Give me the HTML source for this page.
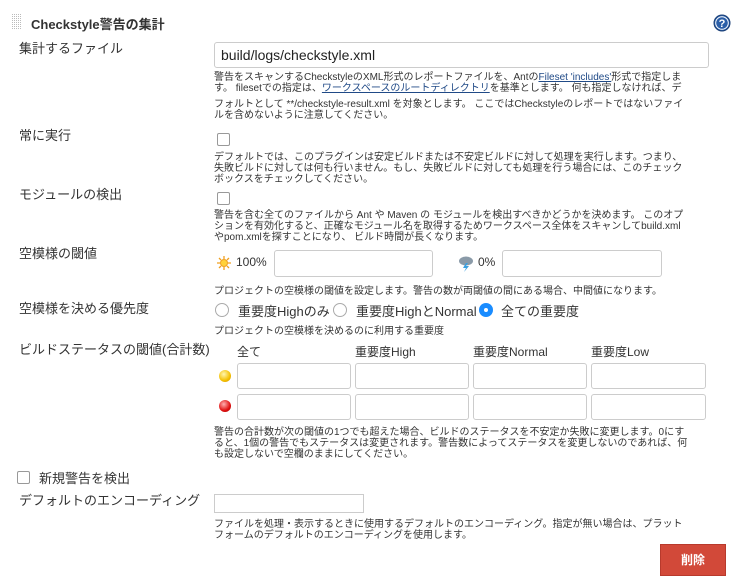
<!DOCTYPE html>
<html><head><meta charset="utf-8"><style>
body{margin:0;width:754px;height:588px;background:#fff;position:relative;overflow:hidden;font-family:"Liberation Sans","Noto Sans CJK JP",sans-serif;color:#333}
.a{position:absolute;white-space:nowrap}
.lbl{font-size:13px;color:#333}
.h{font-size:10px;line-height:11px;color:#333}
.in{position:absolute;border:1px solid #ccc;border-radius:3px;background:#fff;box-sizing:border-box}
.cb{position:absolute;width:11px;height:11px;border:1px solid #999;border-radius:2px;background:#fff}
.rd{position:absolute;width:12px;height:12px;border:1px solid #aaa;border-radius:50%;background:#fff}
a{color:#204a87}
</style></head><body>
<svg class="a" style="left:12px;top:14px" width="10" height="16"><defs><pattern id="p" width="2" height="2" patternUnits="userSpaceOnUse"><rect width="1" height="1" fill="#bbb"/></pattern></defs><rect width="10" height="16" fill="url(#p)"/></svg>
<div class="a lbl" style="left:31px;top:14px;font-weight:bold">Checkstyle警告の集計</div>
<svg class="a" style="left:713px;top:14px" width="18" height="18" viewBox="0 0 18 18"><circle cx="9" cy="9" r="8" fill="#2a5ea8" stroke="#1c4076"/><circle cx="9" cy="9" r="6.3" fill="none" stroke="#fff" stroke-width="1"/><text x="9" y="13" font-size="11" font-weight="bold" fill="#fff" text-anchor="middle" font-family="Liberation Sans">?</text></svg>

<div class="a lbl" style="left:19px;top:38px">集計するファイル</div>
<div class="in" style="left:214px;top:42px;width:495px;height:26px"></div>
<div class="a" style="left:221px;top:47px;font-size:14px;color:#222">build/logs/checkstyle.xml</div>
<div class="a h" style="left:214px;top:72px">警告をスキャンするCheckstyleのXML形式のレポートファイルを、Antの<a href="#">Fileset 'includes'</a>形式で指定しま<br>す。 filesetでの指定は、<a href="#">ワークスペースのルートディレクトリ</a>を基準とします。 何も指定しなければ、デ</div>
<div class="a h" style="left:214px;top:99px">フォルトとして **/checkstyle-result.xml を対象とします。 ここではCheckstyleのレポートではないファイ<br>ルを含めないように注意してください。</div>

<div class="a lbl" style="left:19px;top:125px">常に実行</div>
<div class="cb" style="left:217px;top:133px"></div>
<div class="a h" style="left:214px;top:152px">デフォルトでは、このプラグインは安定ビルドまたは不安定ビルドに対して処理を実行します。つまり、<br>失敗ビルドに対しては何も行いません。もし、失敗ビルドに対しても処理を行う場合には、このチェック<br>ボックスをチェックしてください。</div>

<div class="a lbl" style="left:19px;top:184px">モジュールの検出</div>
<div class="cb" style="left:217px;top:192px"></div>
<div class="a h" style="left:214px;top:210px">警告を含む全てのファイルから Ant や Maven の モジュールを検出すべきかどうかを決めます。 このオプ<br>ションを有効化すると、正確なモジュール名を取得するためワークスペース全体をスキャンしてbuild.xml<br>やpom.xmlを探すことになり、 ビルド時間が長くなります。</div>

<div class="a lbl" style="left:19px;top:243px">空模様の閾値</div>
<svg class="a" style="left:216px;top:255px" width="16" height="16" viewBox="0 0 16 16"><g stroke="#f0a020" stroke-width="1.3"><path d="M8 1v3M8 12v3M1 8h3M12 8h3M3 3l2 2M11 11l2 2M3 13l2-2M11 5l2-2"/></g><circle cx="8" cy="8" r="3.5" fill="#ffd23a" stroke="#f0a020"/></svg>
<div class="a" style="left:236px;top:255px;font-size:12px">100%</div>
<div class="in" style="left:274px;top:250px;width:159px;height:27px"></div>
<svg class="a" style="left:457px;top:254px" width="18" height="18" viewBox="0 0 18 18"><ellipse cx="9" cy="7" rx="7" ry="4.5" fill="#8a9aa8"/><path d="M9 9l-3 5h3l-2 4 5-6H9l2-3z" fill="#3aa0e0"/></svg>
<div class="a" style="left:478px;top:255px;font-size:12px">0%</div>
<div class="in" style="left:502px;top:250px;width:160px;height:27px"></div>
<div class="a h" style="left:214px;top:286px">プロジェクトの空模様の閾値を設定します。警告の数が両閾値の間にある場合、中間値になります。</div>

<div class="a lbl" style="left:19px;top:298px">空模様を決める優先度</div>
<div class="rd" style="left:215px;top:303px"></div>
<div class="a" style="left:238px;top:301px;font-size:13px">重要度Highのみ</div>
<div class="rd" style="left:333px;top:303px"></div>
<div class="a" style="left:356px;top:301px;font-size:13px">重要度HighとNormal</div>
<div class="a" style="left:479px;top:303px;width:14px;height:14px;border-radius:50%;background:#1a8cff"></div>
<div class="a" style="left:484px;top:308px;width:4px;height:4px;border-radius:50%;background:#fff"></div>
<div class="a" style="left:501px;top:301px;font-size:13px">全ての重要度</div>
<div class="a h" style="left:214px;top:326px">プロジェクトの空模様を決めるのに利用する重要度</div>

<div class="a lbl" style="left:19px;top:339px">ビルドステータスの閾値(合計数)</div>
<div class="a" style="left:237px;top:343px;font-size:12px">全て</div>
<div class="a" style="left:355px;top:343px;font-size:12px">重要度High</div>
<div class="a" style="left:473px;top:343px;font-size:12px">重要度Normal</div>
<div class="a" style="left:591px;top:343px;font-size:12px">重要度Low</div>
<div class="a" style="left:219px;top:370px;width:12px;height:12px;border-radius:50%;background:radial-gradient(circle at 40% 35%,#fff6b0,#f5c000 60%,#c88a00)"></div>
<div class="a" style="left:219px;top:400px;width:12px;height:12px;border-radius:50%;background:radial-gradient(circle at 40% 35%,#ffb0b0,#e01010 60%,#900)"></div>
<div class="in" style="left:237px;top:363px;width:114px;height:26px"></div>
<div class="in" style="left:355px;top:363px;width:114px;height:26px"></div>
<div class="in" style="left:473px;top:363px;width:114px;height:26px"></div>
<div class="in" style="left:591px;top:363px;width:115px;height:26px"></div>
<div class="in" style="left:237px;top:394px;width:114px;height:26px"></div>
<div class="in" style="left:355px;top:394px;width:114px;height:26px"></div>
<div class="in" style="left:473px;top:394px;width:114px;height:26px"></div>
<div class="in" style="left:591px;top:394px;width:115px;height:26px"></div>
<div class="a h" style="left:214px;top:427px">警告の合計数が次の閾値の1つでも超えた場合、ビルドのステータスを不安定か失敗に変更します。0にす<br>ると、1個の警告でもステータスは変更されます。警告数によってステータスを変更しないのであれば、何<br>も設定しないで空欄のままにしてください。</div>

<div class="cb" style="left:17px;top:471px"></div>
<div class="a lbl" style="left:39px;top:468px">新規警告を検出</div>
<div class="a lbl" style="left:19px;top:490px">デフォルトのエンコーディング</div>
<div class="in" style="left:214px;top:494px;width:150px;height:19px;border-radius:0"></div>
<div class="a h" style="left:214px;top:519px">ファイルを処理・表示するときに使用するデフォルトのエンコーディング。指定が無い場合は、プラット<br>フォームのデフォルトのエンコーディングを使用します。</div>
<div class="a" style="left:660px;top:544px;width:66px;height:32px;background:#d24939;border:1px solid #b83a2c;box-sizing:border-box;color:#fff;font-size:12px;font-weight:bold;text-align:center;line-height:30px">削除</div>
</body></html>
